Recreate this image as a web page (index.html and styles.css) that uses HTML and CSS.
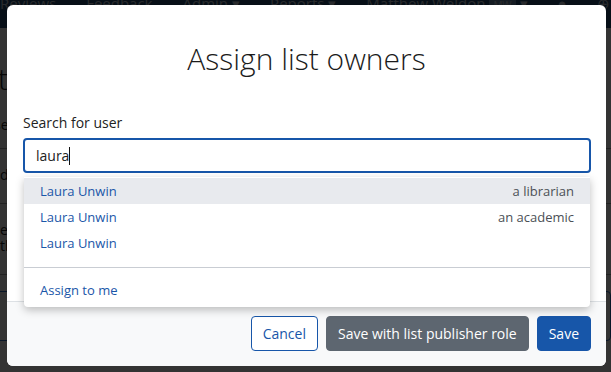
FILE: index.html
```html
<!DOCTYPE html>
<html lang="en">
<head>
    <meta charset="UTF-8">
    <title>Assign list owners</title>
    <link rel="stylesheet" href="styles.css">
</head>
<body>
    <div class="page">
        <nav class="topnav">
            <span>Reviews</span>
            <span>Feedback</span>
            <span>Admin &#9662;</span>
            <span>Reports &#9662;</span>
            <span>Matthew Weldon <small>MW</small> &#9662;</span>
            <span>&#9679;</span>
            <span>&#8853;</span>
        </nav>
        <div class="page-body">
            <h1>tions</h1>
            <p class="lead">se the options below</p>
            <div class="row">d</div>
            <div class="row">er<br>th</div>
            <div class="box"></div>
        </div>
    </div>

    <div class="overlay">
        <div class="modal">
            <div class="modal-header">
                <h2>Assign list owners</h2>
            </div>

            <div class="modal-body">
                <label for="user-search">Search for user</label>
                <div class="search">
                    <input id="user-search" type="text" value="laura">
                    <span class="caret"></span>

                    <ul class="results">
                        <li class="active"><span>Laura Unwin</span><span class="role">a librarian</span></li>
                        <li><span>Laura Unwin</span><span class="role">an academic</span></li>
                        <li><span>Laura Unwin</span></li>
                        <li class="divider"></li>
                        <li><span>Assign to me</span></li>
                    </ul>
                </div>
            </div>

            <div class="modal-footer">
                <button class="btn btn-outline">Cancel</button>
                <button class="btn btn-grey">Save with list publisher role</button>
                <button class="btn btn-primary">Save</button>
            </div>
        </div>
    </div>
</body>
</html>
```

FILE: styles.css
```css
body {
    margin: 0;
    font-family: 'Open Sans', 'Noto Sans', sans-serif;
    color: #222;
    overflow: hidden;
    height: 372px;
}

/* page behind the dialog */
.page {
    background: #fff;
    height: 100%;
}

.topnav {
    display: flex;
    gap: 30px;
    height: 28px;
    background: #234b73;
    color: #c9d3de;
    font-size: 15px;
    line-height: 6px;
    white-space: nowrap;
    overflow: hidden;
}

.topnav small {
    font-size: 10px;
    background: #6a8bad;
    padding: 0 4px;
}

.page-body {
    padding: 30px 0 0;
    color: #222;
}

.page-body h1 {
    margin: 0 0 16px;
    font-size: 30px;
    font-weight: 300;
    margin-left: -2px;
}

.lead {
    margin: 0;
    padding-bottom: 14px;
    border-bottom: 1px solid #aaa;
    font-size: 14px;
    margin-left: -6px;
    white-space: nowrap;
}

.row {
    padding: 18px 0 20px;
    border-bottom: 1px solid #aaa;
    font-size: 14px;
    line-height: 16px;
}

.box {
    margin-top: 16px;
    height: 48px;
    border: 1px solid #2f6fc0;
    border-radius: 4px;
    margin-left: -10px;
}

.overlay {
    position: fixed;
    inset: 0;
    background: rgba(0, 0, 0, 0.8);
}

.modal {
    position: absolute;
    left: 7px;
    top: 5px;
    width: 599px;
    background: #fff;
    border-radius: 6px;
}

.modal-header {
    padding: 36px 16px 0;
    text-align: center;
}

.modal-header h2 {
    margin: 0;
    font-size: 30px;
    font-weight: 300;
    line-height: 36px;
    color: #1b1b1b;
}

.modal-body {
    padding: 36px 15px 0 16px;
    height: 188px;
}

.modal-body label {
    display: block;
    font-size: 14px;
    line-height: 20px;
    margin-bottom: 5px;
}

.search {
    position: relative;
}

.search input {
    box-sizing: border-box;
    display: block;
    width: 100%;
    height: 35px;
    border: 2px solid #1756a9;
    border-radius: 4px;
    padding: 0 11px;
    font-family: inherit;
    font-size: 14px;
    color: #222;
    outline: none;
}

.caret {
    position: absolute;
    left: 46px;
    top: 9px;
    width: 1px;
    height: 18px;
    background: #111;
}

.results {
    position: absolute;
    top: 39px;
    left: 1px;
    right: 1px;
    margin: 0;
    padding: 1px 0 4px;
    list-style: none;
    background: #fff;
    border-radius: 0 0 4px 4px;
    box-shadow: 0 3px 8px rgba(0, 0, 0, 0.25);
    z-index: 2;
}

.results li {
    display: flex;
    justify-content: space-between;
    align-items: center;
    height: 26px;
    padding: 0 16px;
    font-size: 13px;
    color: #1a56a8;
}

.results li.active {
    background: #e8eaee;
}

.results .role {
    color: #4b5056;
}

.results li.divider {
    height: 1px;
    padding: 0;
    margin: 11px 0 9px;
    background: #c9cdd3;
}

.modal-footer {
    display: flex;
    justify-content: flex-end;
    gap: 8px;
    padding: 14px 15px 15px;
    background: #f8f9fa;
    border-top: 1px solid #dde1e5;
    border-radius: 0 0 6px 6px;
}

.btn {
    height: 35px;
    padding: 0 11px;
    border-radius: 4px;
    border: 1px solid transparent;
    font-family: inherit;
    font-size: 14px;
    font-weight: 500;
    cursor: pointer;
}

.btn-outline {
    background: #fff;
    border-color: #1756a9;
    color: #1756a9;
}

.btn-grey {
    background: #5d6670;
    border-color: #5d6670;
    color: #fff;
}

.btn-primary {
    background: #1756a9;
    border-color: #1756a9;
    color: #fff;
}
```
